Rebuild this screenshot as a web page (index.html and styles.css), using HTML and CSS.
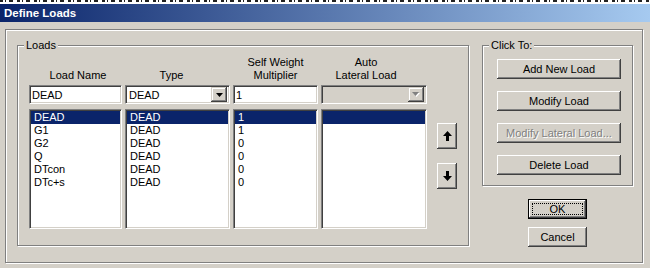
FILE: index.html
```html
<!DOCTYPE html>
<html lang="en">
<head>
    <meta charset="UTF-8">
    <title>Define Loads</title>
    <link rel="stylesheet" href="styles.css">
</head>
<body>
    <div class="strip"></div>
    <div class="titlebar">Define Loads</div>
    <div class="frame etched">
        <div class="group etched loads">
            <div class="group-label">Loads</div>
            <div class="loads-body">
                <div class="grid">
                    <div class="head h-name">Load Name</div>
                    <div class="head h-type">Type</div>
                    <div class="head">Self Weight<br>Multiplier</div>
                    <div class="head h-auto">Auto<br>Lateral Load</div>

                    <input class="edit" type="text" value="DEAD">
                    <div class="combo">
                        <span class="combo-text">DEAD</span>
                        <span class="combo-btn">
                            <svg width="7" height="4" viewBox="0 0 7 4"><polygon points="0,0 7,0 3.5,4" fill="#000"/></svg>
                        </span>
                    </div>
                    <input class="edit" type="text" value="1">
                    <div class="combo disabled">
                        <span class="combo-text"></span>
                        <span class="combo-btn">
                            <svg width="8" height="5" viewBox="0 0 8 5"><polygon points="1,1 8,1 4.5,5" fill="#fff"/><polygon points="0,0 7,0 3.5,4" fill="#808080"/></svg>
                        </span>
                    </div>

                    <ul class="list">
                        <li class="sel">DEAD</li>
                        <li>G1</li>
                        <li>G2</li>
                        <li>Q</li>
                        <li>DTcon</li>
                        <li>DTc+s</li>
                    </ul>
                    <ul class="list">
                        <li class="sel">DEAD</li>
                        <li>DEAD</li>
                        <li>DEAD</li>
                        <li>DEAD</li>
                        <li>DEAD</li>
                        <li>DEAD</li>
                    </ul>
                    <ul class="list">
                        <li class="sel">1</li>
                        <li>1</li>
                        <li>0</li>
                        <li>0</li>
                        <li>0</li>
                        <li>0</li>
                    </ul>
                    <ul class="list">
                        <li class="sel">&nbsp;</li>
                    </ul>
                </div>
                <div class="arrows">
                    <button class="btn arrow-btn">
                        <svg width="9" height="10" viewBox="0 0 9 10"><polygon points="4.5,0 9,5 6,5 6,10 3,10 3,5 0,5" fill="#000"/></svg>
                    </button>
                    <button class="btn arrow-btn">
                        <svg width="9" height="10" viewBox="0 0 9 10"><polygon points="3,0 6,0 6,5 9,5 4.5,10 0,5 3,5" fill="#000"/></svg>
                    </button>
                </div>
            </div>
        </div>

        <div class="side">
            <div class="group etched clickto">
                <div class="group-label">Click To:</div>
                <div class="actions">
                    <button class="btn action">Add New Load</button>
                    <button class="btn action">Modify Load</button>
                    <button class="btn action disabled">Modify Lateral Load...</button>
                    <button class="btn action">Delete Load</button>
                </div>
            </div>
            <button class="btn dlg default"><span class="focus">OK</span></button>
            <button class="btn dlg cancel">Cancel</button>
        </div>
    </div>
</body>
</html>
```

FILE: styles.css
```css
body {
    margin: 0;
    width: 650px;
    height: 268px;
    overflow: hidden;
    background: #d4d0c8;
    font-family: "Liberation Sans", Arial, sans-serif;
    font-size: 11px;
    color: #000;
}
.strip {
    height: 4px;
    background-color: #fff;
    background-image: repeating-linear-gradient(90deg, #222 0 3px, #fff 3px 5px, #222 5px 6px, #fff 6px 9px, #222 9px 13px, #fff 13px 17px);
    background-size: 100% 2px;
    background-repeat: no-repeat;
}
.titlebar {
    height: 18px;
    line-height: 18px;
    padding-left: 4px;
    background: linear-gradient(90deg, #0a246a, #a6caf0);
    color: #fff;
    font-weight: bold;
    font-size: 11.5px;
}
.etched {
    border: 1px solid #808080;
    box-shadow: inset 1px 1px #fff, 1px 1px #fff;
    box-sizing: border-box;
}
.frame {
    margin: 7px 0 0 5px;
    width: 638px;
    height: 234px;
    display: flex;
    align-items: flex-start;
    padding: 15px 0 0 11px;
}
.group-label {
    width: fit-content;
    margin: -7px 0 0 6px;
    padding: 0 2px;
    line-height: 13px;
    background: #d4d0c8;
}
.loads {
    width: 452px;
    height: 201px;
}
.loads-body {
    display: flex;
    margin-top: 4px;
    padding-left: 11px;
}
.grid {
    display: grid;
    grid-template-columns: 93px 105px 85px 106px;
    grid-template-rows: 26px 22px 125px;
    column-gap: 3px;
}
.head {
    align-self: end;
    text-align: center;
    line-height: 13px;
}
.h-name {
    padding-left: 5px;
}
.h-type {
    padding-right: 12px;
}
.h-auto {
    padding-right: 16px;
}
.edit, .combo, .list {
    border: 1px solid;
    border-color: #808080 #fff #fff #808080;
    box-shadow: inset 1px 1px #404040, inset -1px -1px #d4d0c8;
    box-sizing: border-box;
    background: #fff;
}
.edit {
    margin: 3px 0 0;
    height: 19px;
    width: 100%;
    padding: 0 2px;
    font-family: inherit;
    font-size: 11px;
    color: #000;
    outline: none;
}
.combo {
    margin-top: 3px;
    height: 19px;
    display: flex;
    align-items: center;
    padding: 2px;
}
.combo-text {
    flex: 1;
    padding-left: 1px;
}
.combo-btn {
    width: 16px;
    height: 15px;
    display: flex;
    align-items: center;
    justify-content: center;
    background: #d4d0c8;
    box-shadow: inset -1px -1px #404040, inset 1px 1px #d4d0c8, inset -2px -2px #808080, inset 2px 2px #fff;
}
.combo.disabled {
    background: #d4d0c8;
}
.list {
    margin: 5px 0 0;
    height: 120px;
    padding: 1px 1px 0;
    list-style: none;
}
.list li {
    height: 13px;
    line-height: 13px;
    padding-left: 3px;
}
.list li.sel {
    background: #0a246a;
    color: #fff;
}
.arrows {
    display: flex;
    flex-direction: column;
    gap: 14px;
    margin-left: 10px;
    padding-top: 67px;
}
.btn {
    border: none;
    background: #d4d0c8;
    box-shadow: inset -1px -1px #404040, inset 1px 1px #fff, inset -2px -2px #808080;
    font-family: inherit;
    font-size: 11px;
    color: #000;
    padding: 0;
    display: flex;
    align-items: center;
    justify-content: center;
}
.arrow-btn {
    width: 20px;
    height: 26px;
}
.side {
    display: flex;
    flex-direction: column;
    align-items: center;
    margin-left: 13px;
}
.clickto {
    width: 151px;
    height: 141px;
}
.actions {
    display: flex;
    flex-direction: column;
    gap: 12px;
    margin: 7px 0 0 14px;
}
.action {
    width: 124px;
    height: 20px;
}
.action.disabled {
    color: #808080;
    text-shadow: 1px 1px #fff;
}
.dlg {
    width: 59px;
    height: 20px;
}
.default {
    margin-top: 13px;
    border: 1px solid #000;
    padding: 3px;
    box-sizing: border-box;
}
.focus {
    flex: 1;
    align-self: stretch;
    border: 1px dotted #000;
    display: flex;
    align-items: center;
    justify-content: center;
}
.cancel {
    margin-top: 8px;
}
```
